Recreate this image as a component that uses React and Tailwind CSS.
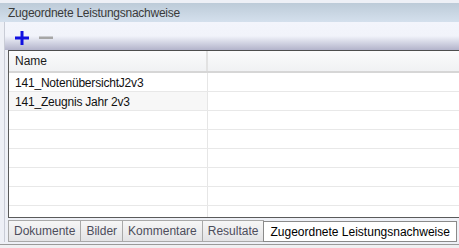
import React from 'react';

const rows = ['141_NotenübersichtJ2v3', '141_Zeugnis Jahr 2v3', '', '', '', '', '', ''];

const tabs = ['Dokumente', 'Bilder', 'Kommentare', 'Resultate'];

const App = () => {
  return (
    <div className="w-[459px] h-[248px] overflow-hidden flex flex-col bg-[#eef0f6] text-[12px] font-['Liberation_Sans',Arial,sans-serif]">
      {/* Titelleiste */}
      <div className="mt-[3px] h-[19px] flex items-center px-[8px] tracking-[-0.25px] text-[#3a3a3a] bg-linear-to-b from-[#bdcbd8] to-[#d4e0ed]">
        Zugeordnete Leistungsnachweise
      </div>

      <div className="flex-1 flex flex-col ml-[4px] border-l border-[#c9ccd6]">
        {/* Toolbar */}
        <div className="h-[28px] flex items-center gap-[8px] pl-[9px] bg-linear-to-b from-[#f3f5fc] via-[#f1f3fa] to-[#b3b4cb]">
          <svg width="16" height="16" viewBox="0 0 16 16" className="mt-[4px]">
            <rect x="1" y="6.5" width="14" height="3" fill="#1010e0" />
            <rect x="6.5" y="1" width="3" height="14" fill="#1010e0" />
          </svg>
          <svg width="16" height="16" viewBox="0 0 16 16" className="mt-[4px]">
            <rect x="1" y="6.5" width="14" height="2.5" fill="#a6a6a6" />
          </svg>
        </div>

        {/* Tabelle */}
        <div className="ml-[3px] h-[168px] bg-white border-l border-t border-b border-[#5a5a5a] border-t-[#4e4e4e] overflow-hidden">
          <div className="flex h-[22px] border-b-2 border-[#d6d6d6] bg-linear-to-b from-[#fbfbfc] to-[#f0f1f3] text-[#1a1a1a]">
            <div className="w-[199px] flex items-center pl-[6px] border-r-2 border-[#e2e2e2]">Name</div>
            <div className="flex-1" />
          </div>
          {rows.map((r, i) => (
            <div key={i} className="flex h-[19px] border-b border-[#e8e8e8] text-[#111]">
              <div className={`w-[199px] flex items-center pl-[6px] pt-px tracking-[-0.2px] border-r border-[#e6e6e6] ${i === 1 ? 'bg-[#f7f7f7]' : 'bg-white'}`}>
                {r}
              </div>
              <div className="flex-1" />
            </div>
          ))}
        </div>

        {/* Reiter */}
        <div className="flex items-end h-[24px] pl-[3px]">
          {tabs.map((t) => (
            <div
              key={t}
              className="h-[22px] -ml-px first:ml-0 flex items-center px-[5px] border border-[#a9a9a9] bg-linear-to-b from-[#f6f6f6] to-[#e3e3e5] text-[#4d4d5c]"
            >
              {t}
            </div>
          ))}
          <div className="h-[21px] -ml-px flex items-center px-[6px] border border-[#8a8a8a] bg-white text-black">
            Zugeordnete Leistungsnachweise
          </div>
        </div>
      </div>

      <div className="h-[4px] border-t border-[#9a9a9a] bg-[#f0f0f2] mt-[2px]" />
    </div>
  );
};

export default App;
